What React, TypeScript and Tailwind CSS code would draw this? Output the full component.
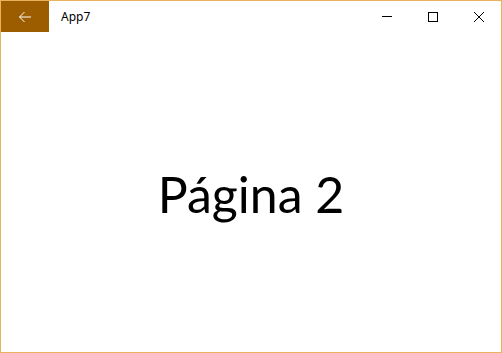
import React from "react";

export default function App() {
  return (
    <div className="w-[502px] h-[353px] bg-white border border-[#ebb25e] flex flex-col overflow-hidden" style={{ fontFamily: '"Noto Sans", "Open Sans", sans-serif' }}>
      <div className="h-[31px] flex items-stretch shrink-0">
        <div className="w-[48px] bg-[#9c5c00] flex items-center justify-center">
          <svg width="14" height="12" viewBox="0 0 14 12" fill="none" stroke="white" strokeWidth="1">
            <path d="M13 6H1.5M6.5 1L1.5 6l5 5" />
          </svg>
        </div>
        <div className="flex-1 flex items-center pl-[12px] text-[12px] text-black">App7</div>
        <div className="w-[46px] flex items-center justify-center">
          <div className="w-[10px] h-px bg-black" />
        </div>
        <div className="w-[46px] flex items-center justify-center">
          <div className="w-[10px] h-[10px] border border-black" />
        </div>
        <div className="w-[45px] flex items-center justify-center">
          <svg width="10" height="10" viewBox="0 0 10 10" stroke="black" strokeWidth="1">
            <path d="M0 0L10 10M10 0L0 10" />
          </svg>
        </div>
      </div>
      <div className="flex-1 flex items-center justify-center pt-[4px]">
        <span className="text-[50px] text-black leading-none" style={{ fontFamily: 'Lato, sans-serif' }}>Página 2</span>
      </div>
    </div>
  );
}
